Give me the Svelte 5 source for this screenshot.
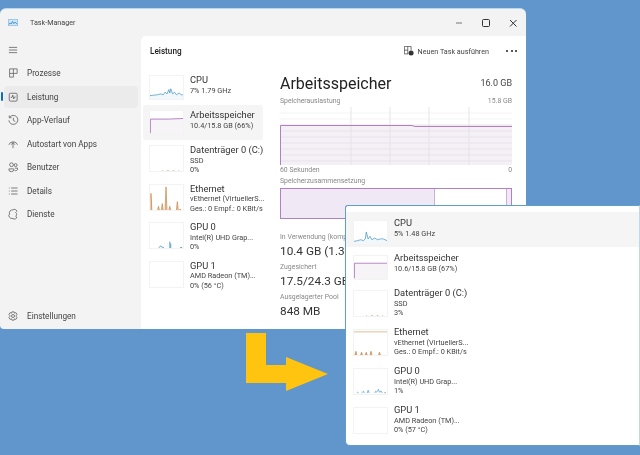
<script>
  const mainRows = [
    { title: 'CPU', lines: ['7%  1.79 GHz'], kind: 'cpu' },
    { title: 'Arbeitsspeicher', lines: ['10.4/15.8 GB (66%)'], kind: 'mem', active: true },
    { title: 'Datenträger 0 (C:)', lines: ['SSD', '0%'], kind: 'disk' },
    { title: 'Ethernet', lines: ['vEthernet (VirtuellerS...', 'Ges.: 0 Empf.: 0 KBit/s'], kind: 'eth' },
    { title: 'GPU 0', lines: ['Intel(R) UHD Grap...', '0%'], kind: 'gpu' },
    { title: 'GPU 1', lines: ['AMD Radeon (TM)...', '0%  (56 °C)'], kind: 'none' }
  ];
  const popRows = [
    { title: 'CPU', lines: ['5%  1.48 GHz'], kind: 'cpu2', hover: true },
    { title: 'Arbeitsspeicher', lines: ['10.6/15.8 GB (67%)'], kind: 'mem2' },
    { title: 'Datenträger 0 (C:)', lines: ['SSD', '3%'], kind: 'disk' },
    { title: 'Ethernet', lines: ['vEthernet (VirtuellerS...', 'Ges.: 0 Empf.: 0 KBit/s'], kind: 'eth2' },
    { title: 'GPU 0', lines: ['Intel(R) UHD Grap...', '1%'], kind: 'gpu2' },
    { title: 'GPU 1', lines: ['AMD Radeon (TM)...', '0%  (57 °C)'], kind: 'none' }
  ];
  const nav = [
    { label: 'Prozesse', icon: 'proc' },
    { label: 'Leistung', icon: 'perf', active: true },
    { label: 'App-Verlauf', icon: 'hist' },
    { label: 'Autostart von Apps', icon: 'auto' },
    { label: 'Benutzer', icon: 'users' },
    { label: 'Details', icon: 'list' },
    { label: 'Dienste', icon: 'serv' }
  ];
  const stats = [
    { label: 'In Verwendung (komprimiert)', value: '10.4 GB (1.3 GB)' },
    { label: 'Zugesichert', value: '17.5/24.3 GB' },
    { label: 'Ausgelagerter Pool', value: '848 MB' }
  ];
  const hLines = [125, 131, 137, 143, 149, 155, 161];
  const vLines = [71, 110, 149, 189];
</script>

{#snippet thumb(kind)}
  <svg class="thumb" viewBox="0 0 35 27" preserveAspectRatio="none">
    {#if kind === 'cpu'}
      <path d="M0 23L4 22.500L8 22L11 21L14 22L16 19L18 21L20 16L21 20L22 15L24 21L26 19L28 22L31 20L33 22L35 22V27H0Z" fill="#f1f7fb" />
      <path d="M0 23L4 22.500L8 22L11 21L14 22L16 19L18 21L20 16L21 20L22 15L24 21L26 19L28 22L31 20L33 22L35 22" fill="none" stroke="#3f94c9" stroke-width=".8" />
    {:else if kind === 'cpu2'}
      <path d="M0 24L4 23L7 22L10 23L12 21L13 13L15 21L17 18L19 22L22 20L25 22L28 21L31 21L35 23V27H0Z" fill="#f1f7fb" />
      <path d="M0 24L4 23L7 22L10 23L12 21L13 13L15 21L17 18L19 22L22 20L25 22L28 21L31 21L35 23" fill="none" stroke="#3f94c9" stroke-width=".8" />
    {:else if kind === 'mem'}
      <path d="M0 9H35V27H0Z" fill="#f7f4f8" />
      <path d="M.4 26V9.500H20L35 8.800" fill="none" stroke="#a868bb" stroke-width=".9" />
    {:else if kind === 'mem2'}
      <path d="M0 9H35V27H0Z" fill="#f7f4f8" />
      <path d="M.4 26V8.500H35" fill="none" stroke="#a868bb" stroke-width=".9" />
    {:else if kind === 'disk'}
      <path d="M13 26.500h1M18 26.500h2M24 26.500h2M30 26.500h1" stroke="#9fbb8f" stroke-width=".7" />
    {:else if kind === 'eth'}
      <path d="M1 27V9L2 27M8 27L9 23L10 27M12 27L13 20L14 27M16 27L17 2L18 27M20 27L21 23L22 27M28 27L29 18L30 27M31 27L32 26L33 27" fill="#e6c8ab" stroke="#c5823f" stroke-width=".7" />
    {:else if kind === 'eth2'}
      <path d="M0 2H35" stroke="#dba976" stroke-width=".8" />
      <path d="M1 27L2 23L3 27M7 27L8 24L9 27M12 27L13 24L14 27M17 27L18 23L19 27M26 27L27 24L28 27" fill="#d9b089" stroke="#c5823f" stroke-width=".7" />
    {:else if kind === 'gpu'}
      <path d="M9 27L11 25L15 27M21 27V20M22 27V22M32 26.500H34" fill="none" stroke="#3f94c9" stroke-width=".9" />
    {:else if kind === 'gpu2'}
      <path d="M3 26L4 25L5 26M8 26L10 24L11 26M14 26L15 23L16 26M22 26L23 24L24 25L26 22L27 25L29 24L30 26M32 26L34 25" fill="none" stroke="#3f94c9" stroke-width=".7" />
    {/if}
  </svg>
{/snippet}

{#snippet perfRow(row)}
  <div class="row" class:active={row.active} class:hover={row.hover} class:three={row.lines.length === 2}>
    {@render thumb(row.kind)}
    <div class="row-text">
      <div class="row-title">{row.title}</div>
      {#each row.lines as line}
        <div class="row-sub">{line}</div>
      {/each}
    </div>
  </div>
{/snippet}

{#snippet navIcon(name)}
  <svg class="nav-icon" viewBox="0 0 16 16" fill="none" stroke="#555" stroke-width="1">
    {#if name === 'proc'}
      <path d="M3.500 2.500H13.500V8.500H8.500V13.500H3.500ZM8.500 2.500V8.500H3.500" />
    {:else if name === 'perf'}
      <rect x="3" y="3" width="10.500" height="10.500" rx="1.500" />
      <path d="M5 8.500H6.700L7.700 5.500L9 10.500L10 8H11.500" />
    {:else if name === 'hist'}
      <path d="M3.500 4.500A6 6 0 1 1 2.500 8.500M3 2V5H6M8.500 5V8.500L11 10" />
    {:else if name === 'auto'}
      <path d="M2.500 9A6 5.500 0 0 1 14 9M8 6V13.500M5.500 9L8 6L10.500 9" />
    {:else if name === 'users'}
      <circle cx="6" cy="5" r="2.500" /><circle cx="11.500" cy="5.500" r="2" />
      <path d="M2.500 10.500H9V11.500A3 2.500 0 0 1 2.500 11.500ZM10.500 9.500H14V11A2.500 2 0 0 1 10 12.500" />
    {:else if name === 'list'}
      <path d="M5.500 4H14M5.500 8H14M5.500 12H14M2.500 4H3.500M2.500 8H3.500M2.500 12H3.500" />
    {:else if name === 'serv'}
      <path d="M8 2.500A3 3 0 0 1 13 4.500L11.500 6A3 3 0 0 1 11.500 11L13 12A3 3 0 0 1 8 14A5 5 0 0 1 3 12A3 3 0 0 1 3.500 8A4 4 0 0 1 4 4A5 5 0 0 1 8 2.500Z" />
    {/if}
  </svg>
{/snippet}

<div class="desktop">
  <section class="window">
    <header class="titlebar">
      <svg class="app-icon" viewBox="0 0 13 9">
        <rect x=".5" y=".5" width="12" height="8" fill="#cfe6f7" stroke="#8cc0e6" />
        <path d="M1 7L3 5L4 6.500L6 3L7.500 6L9 4L12 6.500" fill="none" stroke="#2f86c9" />
      </svg>
      <span class="app-name">Task-Manager</span>
      <div class="controls">
        <svg viewBox="0 0 10 10"><path d="M2 5H8" stroke="#777" /></svg>
        <svg viewBox="0 0 10 10"><rect x="1.500" y="1.500" width="7" height="7" rx="1" fill="none" stroke="#333" /></svg>
        <svg viewBox="0 0 10 10"><path d="M2 2L8.500 8.500M8.500 2L2 8.500" stroke="#333" /></svg>
      </div>
    </header>
    <div class="body">
      <nav class="sidebar">
        <div class="nav-item">
          <svg class="nav-icon" viewBox="0 0 16 16"><path d="M2.500 4.500H13.500M2.500 8H13.500M2.500 11.500H13.500" stroke="#555" /></svg>
        </div>
        {#each nav as item}
          <div class="nav-item" class:selected={item.active}>
            {@render navIcon(item.icon)}
            <span>{item.label}</span>
          </div>
        {/each}
        <div class="nav-item settings">
          <svg class="nav-icon" viewBox="0 0 16 16" fill="none" stroke="#555">
            <circle cx="8" cy="8" r="2" />
            <path d="M6.500 2.500H9.500L10 4.300L11.800 3.500L13.500 5.800L12.300 7L12.300 9L13.500 10.200L11.800 12.500L10 11.700L9.500 13.500H6.500L6 11.700L4.200 12.500L2.500 10.200L3.700 9V7L2.500 5.800L4.200 3.500L6 4.300Z" />
          </svg>
          <span>Einstellungen</span>
        </div>
      </nav>
      <main class="main">
        <div class="main-head">
          <strong>Leistung</strong>
          <div class="head-actions">
            <svg class="task-icon" viewBox="0 0 12 12" fill="none" stroke="#444" stroke-width=".9">
              <path d="M.5 .5H8.500V5M.5 .5V9.500H5M4.500 .5V9.500M.5 5H4.500" />
              <circle cx="8.500" cy="8.500" r="3" fill="#333" stroke="none" />
            </svg>
            <span>Neuen Task ausführen</span>
            <div class="dots"><i></i><i></i><i></i></div>
          </div>
        </div>
        <div class="main-body">
          <div class="list">
            {#each mainRows as row}
              {@render perfRow(row)}
            {/each}
          </div>
          <div class="detail">
            <div class="detail-head">
              <h1>Arbeitsspeicher</h1>
              <span>16.0 GB</span>
            </div>
            <div class="caption"><span>Speicherauslastung</span><span>15.8 GB</span></div>
            <svg class="chart" viewBox="0 0 232 58" preserveAspectRatio="none">
              <rect width="232" height="58" fill="#fff" />
              <rect y="18" width="232" height="40" fill="#f4f0f6" />
              {#each hLines as y}
                <path d="M0 {y - 107}H232" stroke="#e9e3ec" />
              {/each}
              <path d="M0 6H232M0 12H232" stroke="#f4f4f4" />
              {#each vLines as x}
                <path d="M{x} 0V58" stroke="#e6e3e8" />
              {/each}
              <path d="M.5 58V18.500H132L135 19.500H232" fill="none" stroke="#b27fc2" />
            </svg>
            <div class="caption small"><span>60 Sekunden</span><span>0</span></div>
            <div class="caption comp">Speicherzusammensetzung</div>
            <div class="composition">
              <div class="used"></div>
              <div class="free"></div>
              <div class="rest"></div>
            </div>
            <div class="stats">
              {#each stats as stat}
                <div class="stat-label">{stat.label}</div>
                <div class="stat-value">{stat.value}</div>
              {/each}
            </div>
          </div>
        </div>
      </main>
    </div>
  </section>

  <svg class="arrow" viewBox="0 0 84 60">
    <path d="M0 0H20V32H40V24L82 41L40 58V50H0Z" fill="#ffc40f" />
  </svg>

  <aside class="popup">
    {#each popRows as row}
      {@render perfRow(row)}
    {/each}
  </aside>
</div>

<style>
  :global(body) {
    margin: 0;
    background: #6096cb;
  }
  .desktop {
    position: relative;
    width: 640px;
    height: 455px;
    overflow: hidden;
    background: #6096cb;
    font-family: Roboto, "Noto Sans", sans-serif;
    color: #333;
    filter: blur(0.3px);
  }
  .window {
    position: absolute;
    left: 0;
    top: 8px;
    width: 526px;
    height: 321px;
    display: flex;
    flex-direction: column;
    box-sizing: border-box;
    overflow: hidden;
    background: #f3f3f3;
    border-top: 1px solid #b6d8ee;
    border-radius: 6px 6px 0 4px;
  }
  .titlebar {
    height: 27px;
    flex: none;
    display: flex;
    align-items: center;
    padding-left: 8px;
  }
  .app-icon {
    width: 10px;
    height: 7px;
  }
  .app-name {
    margin-left: 12px;
    font-size: 7.200px;
    color: #444;
  }
  .controls {
    margin-left: auto;
    display: flex;
    gap: 17px;
    padding-right: 8px;
  }
  .controls svg {
    width: 10px;
    height: 10px;
  }
  .body {
    flex: 1;
    display: flex;
    min-height: 0;
  }
  .sidebar {
    width: 141px;
    flex: none;
    display: flex;
    flex-direction: column;
    padding-top: 2px;
    padding-bottom: 1px;
    box-sizing: border-box;
    font-size: 8.200px;
    color: #444;
  }
  .nav-item {
    position: relative;
    height: 23.500px;
    flex: none;
    display: flex;
    align-items: center;
    padding-left: 7px;
  }
  .nav-item span {
    margin-left: 8px;
  }
  .nav-item.selected::before {
    content: "";
    position: absolute;
    left: 4px;
    right: 3px;
    top: 1px;
    bottom: 1px;
    background: #ebebeb;
    border-radius: 4px;
  }
  .nav-item.selected::after {
    content: "";
    position: absolute;
    left: 1px;
    top: 7px;
    height: 9px;
    width: 2px;
    background: #0f6cbd;
    border-radius: 1px;
  }
  .nav-item > * {
    position: relative;
    z-index: 1;
  }
  .nav-icon {
    width: 12px;
    height: 12px;
    flex: none;
  }
  .settings {
    margin-top: auto;
  }
  .main {
    flex: 1;
    min-width: 0;
    background: #fff;
    border-radius: 5px 0 0 0;
    display: flex;
    flex-direction: column;
  }
  .main-head {
    height: 30px;
    flex: none;
    display: flex;
    align-items: center;
    justify-content: space-between;
    padding: 0 9px;
    font-size: 8.200px;
    color: #444;
  }
  .main-head strong {
    font-weight: 500;
    color: #222;
  }
  .head-actions {
    display: flex;
    align-items: center;
    font-size: 7.200px;
  }
  .task-icon {
    width: 10px;
    height: 10px;
    margin-right: 4px;
  }
  .dots {
    display: flex;
    gap: 2.500px;
    margin-left: 17px;
  }
  .dots i {
    width: 2px;
    height: 2px;
    background: #222;
    border-radius: 50%;
  }
  .main-body {
    flex: 1;
    display: flex;
    padding-top: 4px;
    min-height: 0;
  }
  .list {
    width: 131px;
    flex: none;
    padding: 0 9px 0 2px;
    box-sizing: border-box;
  }
  .row {
    height: 35px;
    box-sizing: border-box;
    padding: 5px 0 0 6px;
    display: flex;
    border-radius: 3px;
    gap: 6px;
  }
  .row.three {
    height: 38.500px;
  }
  .row.active {
    background: #f5f5f5;
  }
  .thumb {
    width: 35px;
    height: 25px;
    flex: none;
    box-sizing: border-box;
    border: 1px solid #f3f3f3;
    background: #fff;
  }
  .three .thumb {
    height: 27px;
  }
  .row-text {
    min-width: 0;
    white-space: nowrap;
  }
  .row-title {
    font-size: 9.300px;
    line-height: 10.800px;
    color: #333;
  }
  .row-sub {
    font-size: 7.300px;
    line-height: 9.200px;
    color: #444;
  }
  .detail {
    flex: 1;
    padding-right: 14px;
    min-width: 0;
    padding-left: 8px;
  }
  .detail-head {
    display: flex;
    justify-content: space-between;
    align-items: center;
    height: 26px;
  }
  .detail-head h1 {
    margin: 0;
    font-size: 16px;
    font-weight: 400;
    color: #222;
  }
  .detail-head span {
    font-size: 9px;
    color: #444;
  }
  .caption {
    display: flex;
    justify-content: space-between;
    font-size: 6.900px;
    line-height: 10px;
    color: #888;
    height: 11px;
  }
  .chart {
    display: block;
    width: 232px;
    height: 58px;
  }
  .caption.comp {
    height: 12px;
  }
  .composition {
    width: 232px;
    height: 31px;
    box-sizing: border-box;
    border: 1px solid #b27fc2;
    display: flex;
  }
  .used {
    width: 153px;
    background: #f0e8f4;
    border-right: 1px solid #c9b3d3;
  }
  .free {
    flex: 1;
    background: #fff;
  }
  .rest {
    width: 4px;
    background: #f0e8f4;
    border-left: 1px solid #c9b3d3;
  }
  .stats {
    margin-top: 13px;
    white-space: nowrap;
  }
  .stat-label {
    font-size: 6.900px;
    line-height: 10px;
    color: #888;
  }
  .stat-value {
    font-size: 11.800px;
    line-height: 18px;
    color: #333;
    height: 20px;
  }
  .arrow {
    position: absolute;
    left: 246px;
    top: 333px;
    width: 84px;
    height: 60px;
  }
  .popup {
    position: absolute;
    left: 345px;
    top: 205px;
    width: 295px;
    height: 241px;
    box-sizing: border-box;
    background: #fff;
    border: 1px solid #5f9ec9;
    border-right: 1px solid #bcd8ec;
    border-radius: 3px 0 0 5px;
    padding: 6px 0 0;
  }
  .popup .row {
    padding: 8px 0 0 7px;
    border-radius: 0;
    gap: 6px;
    height: 35px;
  }
  .popup .row.three {
    height: 39px;
  }
  .popup .row-text {
    margin-top: -2px;
  }
  .popup .row.hover {
    background: #f5f5f5;
  }
</style>
